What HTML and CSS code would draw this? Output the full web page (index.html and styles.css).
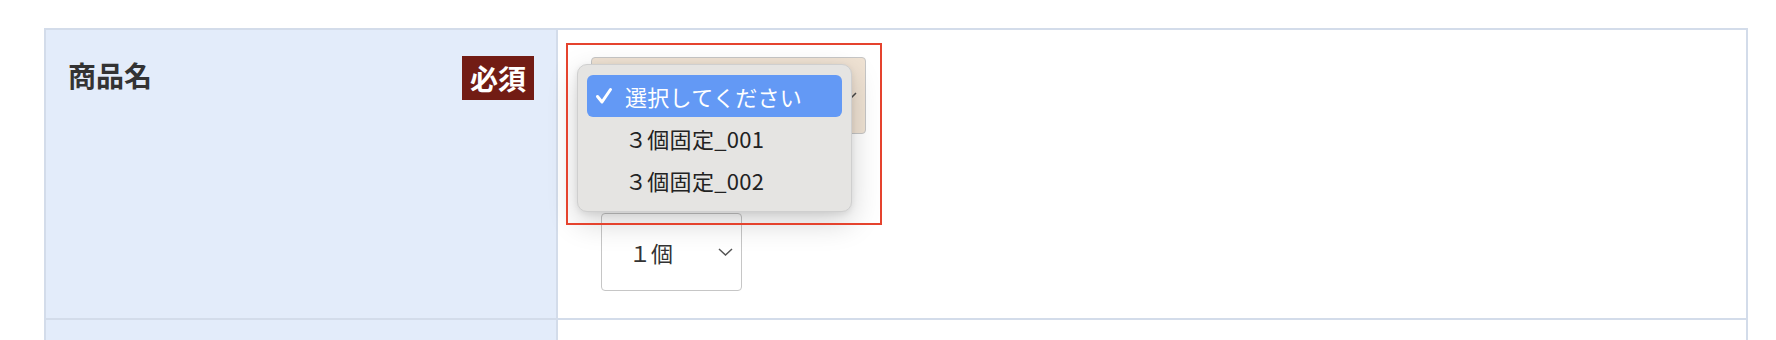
FILE: index.html
```html
<!DOCTYPE html>
<html lang="ja">
<head>
<meta charset="utf-8">
<title>商品名</title>
<link rel="stylesheet" href="styles.css">
</head>
<body>
<div class="form">
  <div class="row row-main">
    <div class="label-cell">
      <span class="label">商品名</span>
      <span class="badge">必須</span>
    </div>
    <div class="field-cell">
      <div class="select select-product">
        <svg class="chev" width="14" height="8" viewBox="0 0 14 8"><path d="M1 1 L7 7 L13 1" fill="none" stroke="#4a4a4a" stroke-width="1.5"/></svg>
      </div>
      <div class="select select-qty">
        <span class="select-text">１個</span>
        <svg class="chev" width="15" height="8" viewBox="0 0 15 8"><path d="M1 1 L7.5 7 L14 1" fill="none" stroke="#555" stroke-width="1.5"/></svg>
      </div>

      <div class="menu">
        <div class="menu-item is-selected">
          <svg class="check" width="18" height="18" viewBox="0 0 18 18"><path d="M2.5 9.5 L7 15 L15.5 2.5" fill="none" stroke="#fff" stroke-width="3" stroke-linecap="round" stroke-linejoin="round"/></svg>
          <span>選択してください</span>
        </div>
        <div class="menu-item"><span>３個固定_001</span></div>
        <div class="menu-item"><span>３個固定_002</span></div>
      </div>
      <div class="highlight-box"></div>
    </div>
  </div>
  <div class="row row-next">
    <div class="label-cell"></div>
    <div class="field-cell"></div>
  </div>
</div>
</body>
</html>
```

FILE: styles.css
```css
* { box-sizing: border-box; }

html, body {
  margin: 0;
  padding: 0;
  background: #ffffff;
}

body {
  font-family: "Noto Sans CJK JP", "Noto Sans", sans-serif;
  color: #333333;
  overflow: hidden;
}

.form {
  width: 1704px;
  margin: 28px 0 0 44px;
  border: 2px solid #d3dcea;
  border-bottom: none;
}

.row {
  display: grid;
  grid-template-columns: 512px 1fr;
  border-bottom: 2px solid #d3dcea;
}

.row-next {
  border-bottom: none;
}

.label-cell {
  background: #e3ecfa;
  border-right: 2px solid #d3dcea;
  display: flex;
  justify-content: space-between;
  align-items: flex-start;
  padding: 26px 22px 0 22px;
}

.row-main .label-cell,
.row-main .field-cell {
  height: 288px;
}

.row-next .label-cell,
.row-next .field-cell {
  height: 20px;
  padding: 0;
}

.label {
  font-size: 28px;
  font-weight: 700;
  line-height: 38px;
  color: #333333;
}

.badge {
  background: #721c14;
  color: #ffffff;
  font-size: 28px;
  font-weight: 700;
  line-height: 44px;
  height: 44px;
  padding: 0 8px;
}

.field-cell {
  position: relative;
  background: #ffffff;
  display: flex;
  flex-direction: column;
  align-items: flex-start;
  padding-top: 27px;
}

.select {
  display: flex;
  align-items: center;
  justify-content: space-between;
  border: 1.5px solid #c6c6c6;
  border-radius: 4px;
  font-size: 22px;
  color: #333333;
}

.select-product {
  margin-left: 33px;
  width: 275px;
  height: 77px;
  background: #efe2d3;
  padding: 0 8px 0 30px;
  justify-content: flex-end;
}

.select-qty {
  margin-left: 43px;
  margin-top: 79px;
  width: 141px;
  height: 78px;
  background: #ffffff;
  padding: 0 8px 0 27px;
}

.chev { display: block; }

/* native popup menu opened over the product select */
.menu {
  position: absolute;
  left: 19px;
  top: 34px;
  width: 275px;
  padding: 10px 9px;
  background: #e5e4e2;
  border: 1px solid #cfcfcf;
  border-radius: 10px;
  box-shadow: 0 10px 30px rgba(0, 0, 0, 0.18), 0 2px 6px rgba(0, 0, 0, 0.08);
}

.menu-item {
  display: flex;
  align-items: center;
  height: 42px;
  padding-left: 38px;
  font-size: 22px;
  color: #222222;
  border-radius: 6px;
  letter-spacing: 0.3px;
}

.menu-item.is-selected {
  background: #6399f5;
  color: #ffffff;
  padding-left: 8px;
}

.check {
  display: block;
  margin-right: 12px;
}

/* red annotation rectangle */
.highlight-box {
  position: absolute;
  left: 8px;
  top: 13px;
  width: 316px;
  height: 182px;
  border: 2px solid #e5432e;
}
```
